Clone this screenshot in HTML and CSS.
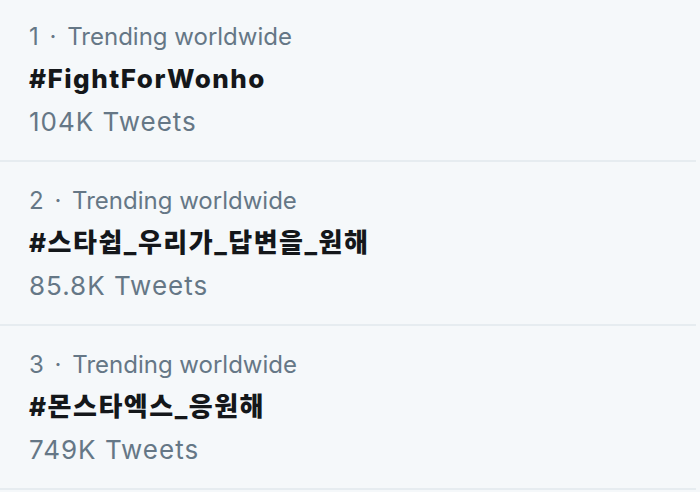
FILE: index.html
```html
<!DOCTYPE html>
<html lang="en">
<head>
<meta charset="utf-8">
<title>Trends</title>
<link rel="stylesheet" href="styles.css">
</head>
<body>
<div class="trends">
  <div class="trend">
    <div class="meta">1 <span class="sep">·</span> Trending worldwide</div>
    <div class="name">#FightForWonho</div>
    <div class="count">104K Tweets</div>
  </div>
  <div class="trend">
    <div class="meta">2 <span class="sep">·</span> Trending worldwide</div>
    <div class="name">#스타쉽_우리가_답변을_원해</div>
    <div class="count">85.8K Tweets</div>
  </div>
  <div class="trend">
    <div class="meta">3 <span class="sep">·</span> Trending worldwide</div>
    <div class="name">#몬스타엑스_응원해</div>
    <div class="count">749K Tweets</div>
  </div>
</div>
</body>
</html>
```
FILE: styles.css
```css
html, body {
  margin: 0;
  padding: 0;
  background: #f5f8fa;
}
body {
  font-family: Inter, "Noto Sans CJK KR", sans-serif;
  width: 700px;
  height: 492px;
  overflow: hidden;
}
.trends {
  width: 696px;
  margin-top: -2px;
}
.trend {
  padding: 18px 0 17px 29px;
  border-bottom: 2px solid #e6ecf0;
  height: 127px;
}
.meta {
  font-size: 24px;
  line-height: 42px;
  color: #657786;
}
.sep {
  margin: 0 4px;
}
.name {
  font-size: 26px;
  line-height: 42px;
  font-weight: 800;
  letter-spacing: 1.5px;
  color: #14171a;
}
.count {
  font-size: 26px;
  line-height: 43px;
  letter-spacing: 1px;
  color: #657786;
}
```
